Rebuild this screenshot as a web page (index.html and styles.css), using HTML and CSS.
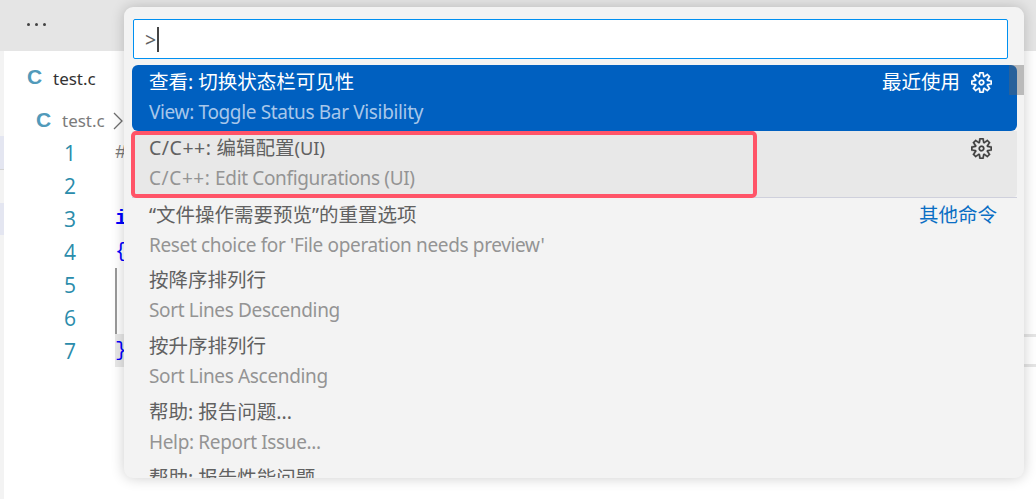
FILE: index.html
```html
<!DOCTYPE html>
<html lang="zh-CN">
<head>
<meta charset="utf-8">
<title>Command Palette</title>
<link rel="stylesheet" href="styles.css">
</head>
<body>
<svg class="defs" width="0" height="0" aria-hidden="true"><defs><symbol id="gear" viewBox="0 0 24 24"><path fill-rule="evenodd" d="M19.85 8.75l4.15.83v4.84l-4.15.83 2.35 3.52-3.43 3.43-3.52-2.35-.83 4.15H9.58l-.83-4.15-3.52 2.35-3.43-3.43 2.35-3.52L0 14.42V9.58l4.15-.83L1.8 5.23 5.23 1.8l3.52 2.35L9.58 0h4.84l.83 4.15 3.52-2.35 3.43 3.43-2.35 3.52zm-1.57 5.07l4-.81v-2l-4-.81-.54-1.3 2.29-3.43-1.43-1.43-3.43 2.29-1.3-.54-.81-4h-2l-.81 4-1.3.54-3.43-2.29-1.43 1.43L6.38 8.9l-.54 1.3-4 .81v2l4 .81.54 1.3-2.29 3.43 1.43 1.43 3.43-2.29 1.3.54.81 4h2l.81-4 1.3-.54 3.43 2.29 1.43-1.43-2.29-3.43.54-1.3zm-8.186-4.672A3.43 3.43 0 0 1 12 8.57 3.44 3.44 0 0 1 15.43 12a3.43 3.43 0 1 1-5.336-2.852zm.956 4.274c.281.188.612.288.95.288A1.7 1.7 0 0 0 13.71 12a1.71 1.71 0 1 0-2.66 1.422z"/></symbol></defs></svg>
<div class="app">
  <header class="topbar"><div class="dots"><i></i><i></i><i></i></div></header>
  <div class="workbench">
    <div class="strip">
      <div class="strip-mark"></div>
      <div class="strip-gap"></div>
      <div class="strip-mark strip-mark-2"></div>
    </div>
    <main class="editor">
      <div class="tab"><span class="c-icon">C</span><span class="tab-name">test.c</span></div>
      <div class="crumbs"><span class="c-icon">C</span><span class="crumb-name">test.c</span><svg class="chevron" width="10" height="18" viewBox="0 0 10 18"><path d="M1 1l8 8-8 8" fill="none" stroke="#6f6f6f" stroke-width="1.3"/></svg></div>
      <div class="code">
        <div class="line"><span class="num">1</span><span class="src hash">#</span></div>
        <div class="line"><span class="num">2</span><span class="src"></span></div>
        <div class="line"><span class="num">3</span><span class="src kw kw-bold">i</span></div>
        <div class="line"><span class="num">4</span><span class="src kw">{</span></div>
        <div class="line"><span class="num">5</span><span class="src guide"></span></div>
        <div class="line"><span class="num">6</span><span class="src guide"></span></div>
        <div class="line"><span class="num">7</span><span class="src kw match">}</span></div>
      </div>
    </main>
    <aside class="side-lines"><div class="side-line"></div><div class="side-line"></div></aside>
  </div>
</div>

<section class="palette">
  <div class="input"><span class="prompt">&gt;</span><span class="caret"></span></div>
  <div class="list">
    <div class="row selected">
      <div class="top"><span class="label">查看: 切换状态栏可见性</span><span class="tag">最近使用</span><svg class="gear gear-after"><use href="#gear"/></svg></div>
      <div class="desc">View: Toggle Status Bar Visibility</div>
    </div>
    <div class="row hover">
      <div class="top"><span class="label"><span class="sym">C/C++:</span> 编辑配置<span class="latin">(UI)</span></span><svg class="gear gear-after"><use href="#gear"/></svg></div>
      <div class="desc"><span class="sym-desc">C/C++:</span> Edit Configurations (UI)</div>
    </div>
    <div class="row sep">
      <div class="top"><span class="label">“文件操作需要预览”的重置选项</span><span class="group">其他命令</span></div>
      <div class="desc">Reset choice for 'File operation needs preview'</div>
    </div>
    <div class="row">
      <div class="top"><span class="label">按降序排列行</span></div>
      <div class="desc">Sort Lines Descending</div>
    </div>
    <div class="row">
      <div class="top"><span class="label">按升序排列行</span></div>
      <div class="desc">Sort Lines Ascending</div>
    </div>
    <div class="row">
      <div class="top"><span class="label">帮助: 报告问题...</span></div>
      <div class="desc">Help: Report Issue...</div>
    </div>
    <div class="row">
      <div class="top"><span class="label">帮助: 报告性能问题</span></div>
      <div class="desc">Help: Report Performance Issue</div>
    </div>
  </div>
  <div class="scrollbar"></div>
  <div class="callout"></div>
</section>
</body>
</html>
```
FILE: styles.css
```css
* { box-sizing: border-box; }
html, body { margin: 0; padding: 0; width: 1036px; height: 499px; overflow: hidden; background: #fff; }
body { font-family: "Noto Sans", "Noto Sans CJK SC", sans-serif; }
.defs { display: block; height: 0; }
.app { display: flex; flex-direction: column; height: 499px; }
.topbar { height: 51px; background: #e5e5e5; display: flex; align-items: center; padding-left: 27px; padding-bottom: 3px; flex: none; }
.dots { display: flex; gap: 5px; }
.dots i { width: 3px; height: 3px; border-radius: 50%; background: #424242; display: block; }
.workbench { flex: 1; display: flex; }
.strip { width: 4px; background: #f3f3f3; padding-top: 85px; flex: none; }
.strip-mark { height: 33px; background: #e4e6f1; }
.strip-gap { height: 34px; border-top: 1px solid #d4d4d4; }
.strip-mark-2 { height: 32px; }
.editor { flex: 1; min-width: 0; }
.tab { height: 54px; display: flex; align-items: center; padding-left: 23px; }
.c-icon { font-family: "Liberation Sans", sans-serif; font-weight: 700; font-size: 21px; line-height: 21px; margin-top: -3px; color: #519aba; width: 26px; }
.tab-name { font-size: 17px; color: #333; }
.crumbs { height: 31px; display: flex; align-items: center; padding-left: 32px; }
.crumb-name { font-size: 17px; color: #7b7b7b; }
.chevron { margin-left: 8px; }
.line { height: 33px; display: flex; align-items: center; }
.num { width: 72px; text-align: right; font-family: "Open Sans", sans-serif; font-size: 21px; color: #2a8cab; flex: none; }
.src { margin-left: 39px; width: 9px; height: 33px; line-height: 33px; font-family: "Liberation Mono", monospace; font-size: 20px; white-space: pre; }
.hash { color: #7a7a7a; }
.kw { color: #0000ff; }
.kw-bold { font-weight: 700; }
.guide { border-left: 2px solid #9a9a9a; }
.match { background: #e8e8e8; }
.side-lines { width: 12px; flex: none; padding-top: 283px; display: flex; flex-direction: column; gap: 27px; position: absolute; left: 1024px; top: 51px; }
.side-line { height: 3px; background: #e5e5e5; }

.palette { position: absolute; left: 124px; top: 7px; width: 900px; height: 471px; background: #f3f3f3; border-radius: 9px; box-shadow: 0 0 14px rgba(0,0,0,.2); padding-top: 12px; overflow: hidden; display: flex; flex-direction: column; }
.input { margin-left: 9px; width: 875px; height: 40px; flex: none; background: #fff; border: 1px solid #0090f1; border-radius: 2px; display: flex; align-items: center; padding-left: 11px; font-size: 19.5px; color: #616161; }
.caret { width: 2px; height: 25px; background: #444; margin-left: 1px; }
.list { margin: 6px 0 0 8px; width: 885px; flex: 1; min-height: 0; overflow: hidden; }
.row { height: 66px; padding: 2px 20px 0 17px; font-size: 19.5px; line-height: 30px; }
.top { display: flex; align-items: center; height: 30px; white-space: nowrap; }
.label { color: #616161; flex: 1; }
.desc { color: #949494; white-space: nowrap; font-size: 19px; letter-spacing: -.35px; }
.sym { letter-spacing: .5px; }
.sym-desc { letter-spacing: .6px; }
.latin { font-size: 18.3px; }
.selected { background: #0060c0; border-radius: 6px; }
.selected .label, .selected .tag { color: #fff; }
.selected .desc { color: #a8c7ea; }
.selected .gear { fill: #fff; stroke: #fff; }
.hover { background: #e8e8e8; border-radius: 0 0 4px 4px; }
.gear { width: 21px; height: 21px; fill: #424242; stroke: #424242; stroke-width: .3; flex: none; }
.gear-after { margin-left: 11px; margin-right: 5px; }
.sep { border-top: 1px solid #cfd0dc; }
.group { color: #0a6ec4; }
.scrollbar { position: absolute; right: 0; top: 58px; width: 15px; height: 30px; background: rgba(100,100,100,.4); }
.callout { position: absolute; left: 7px; top: 124px; width: 626px; height: 67px; border: 4px solid #ff5468; border-radius: 5px; }
```
